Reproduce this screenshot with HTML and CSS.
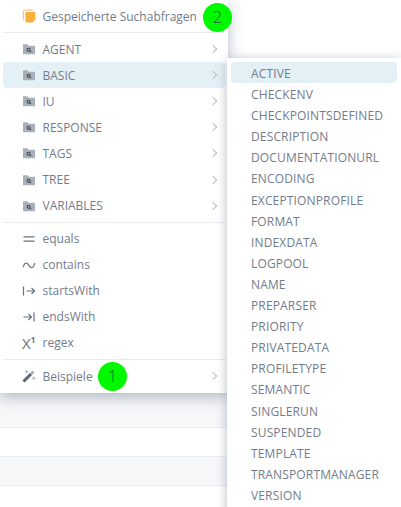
FILE: index.html
```html
<!DOCTYPE html>
<html lang="en">
<head>
    <meta charset="UTF-8">
    <title>Suchabfragen</title>
    <link rel="stylesheet" href="styles.css">
</head>
<body>
    <!-- Table rows behind the menus -->
    <div class="table-rows">
        <div class="table-row first shaded"></div>
        <div class="table-row"></div>
        <div class="table-row shaded"></div>
    </div>

    <!-- Main menu -->
    <div class="menu main-menu">
        <div class="menu-item top-item">
            <svg class="icon" viewBox="0 0 14 14"><path d="M1.400 10.500V3A1.800 1.800 0 0 1 3.200 1.200h7.400" fill="none" stroke="#f8c283" stroke-width="1.300"/><path d="M4.600 3h7.600c.7 0 1.200.5 1.200 1.200v6.600L10.600 13.400H4.600c-.7 0-1.200-.5-1.200-1.200V4.200C3.400 3.500 3.900 3 4.600 3z" fill="#fbb03b"/></svg>
            <span class="label">Gespeicherte Suchabfragen</span>
        </div>
        <div class="divider"></div>
        <div class="menu-item"><svg class="icon"><use href="#folder"/></svg><span class="label">AGENT</span><span class="chevron"></span></div>
        <div class="menu-item active"><svg class="icon"><use href="#folder"/></svg><span class="label">BASIC</span><span class="chevron"></span></div>
        <div class="menu-item"><svg class="icon"><use href="#folder"/></svg><span class="label">IU</span><span class="chevron"></span></div>
        <div class="menu-item"><svg class="icon"><use href="#folder"/></svg><span class="label">RESPONSE</span><span class="chevron"></span></div>
        <div class="menu-item"><svg class="icon"><use href="#folder"/></svg><span class="label">TAGS</span><span class="chevron"></span></div>
        <div class="menu-item"><svg class="icon"><use href="#folder"/></svg><span class="label">TREE</span><span class="chevron"></span></div>
        <div class="menu-item"><svg class="icon"><use href="#folder"/></svg><span class="label">VARIABLES</span><span class="chevron"></span></div>
        <div class="divider"></div>
        <div class="menu-item">
            <svg class="icon" viewBox="0 0 14 14"><path d="M1.500 4.800h11M1.500 9.200h11" class="stroke"/></svg>
            <span class="label">equals</span>
        </div>
        <div class="menu-item">
            <svg class="icon" viewBox="0 0 14 14"><path d="M1.300 9.200C2 5.600 3.600 4.600 5 5.200c1.600.7 2.400 4.200 4.200 4.400 1.600.2 2.900-1.200 3.500-4.400" class="stroke"/></svg>
            <span class="label">contains</span>
        </div>
        <div class="menu-item">
            <svg class="icon" viewBox="0 0 14 14"><path d="M1.500 2.500v9M4.500 7h8M9.500 4l3 3-3 3" class="stroke"/></svg>
            <span class="label">startsWith</span>
        </div>
        <div class="menu-item">
            <svg class="icon" viewBox="0 0 14 14"><path d="M12 2.500v9M1.500 7h8M6.500 4l3 3-3 3" class="stroke"/></svg>
            <span class="label">endsWith</span>
        </div>
        <div class="menu-item">
            <span class="icon regex-icon">X<sup>1</sup></span>
            <span class="label">regex</span>
        </div>
        <div class="divider"></div>
        <div class="menu-item">
            <svg class="icon" viewBox="0 0 14 14"><path d="M1.500 12.500 9 5" fill="none" stroke="#5b6472" stroke-width="3"/><path d="M9 5 11.500 2.500" fill="none" stroke="#aab1bc" stroke-width="3"/><path d="M4.500 1v3.400M2.800 2.700h3.400M11.800 7.500v3.400M10.100 9.200h3.400" fill="none" stroke="#aab1bc" stroke-width="1"/></svg>
            <span class="label">Beispiele</span>
            <span class="chevron"></span>
        </div>
    </div>

    <!-- Submenu of BASIC -->
    <div class="menu sub-menu">
        <div class="sub-item active">ACTIVE</div>
        <div class="sub-item">CHECKENV</div>
        <div class="sub-item">CHECKPOINTSDEFINED</div>
        <div class="sub-item">DESCRIPTION</div>
        <div class="sub-item">DOCUMENTATIONURL</div>
        <div class="sub-item">ENCODING</div>
        <div class="sub-item">EXCEPTIONPROFILE</div>
        <div class="sub-item">FORMAT</div>
        <div class="sub-item">INDEXDATA</div>
        <div class="sub-item">LOGPOOL</div>
        <div class="sub-item">NAME</div>
        <div class="sub-item">PREPARSER</div>
        <div class="sub-item">PRIORITY</div>
        <div class="sub-item">PRIVATEDATA</div>
        <div class="sub-item">PROFILETYPE</div>
        <div class="sub-item">SEMANTIC</div>
        <div class="sub-item">SINGLERUN</div>
        <div class="sub-item">SUSPENDED</div>
        <div class="sub-item">TEMPLATE</div>
        <div class="sub-item">TRANSPORTMANAGER</div>
        <div class="sub-item">VERSION</div>
    </div>

    <!-- Numbered markers -->
    <div class="marker marker-one">1</div>
    <div class="marker marker-two">2</div>

    <svg class="defs" width="0" height="0">
        <symbol id="folder" viewBox="0 0 14 14">
            <path d="M1 3c0-.4.3-.7.7-.7h3.600l1.400 1.400h5.600c.4 0 .7.3.7.7v7.200c0 .4-.3.7-.7.7H1.700c-.4 0-.7-.3-.7-.7z" fill="#a9b0ba"/>
            <circle cx="6.600" cy="7.800" r="1.500" fill="none" stroke="#3f4855" stroke-width="1.100"/>
            <path d="M7.700 8.900 9 10.200" stroke="#3f4855" stroke-width="1.100"/>
        </symbol>
    </svg>
</body>
</html>
```

FILE: styles.css
```css
body {
    margin: 0;
    position: relative;
    overflow: hidden;
    height: 507px;
    background-color: white;
    font-family: "Open Sans", Arial, sans-serif;
    font-size: 12px;
    color: #737c8a;
}

.table-rows {
    padding-top: 393px;
}

.table-row {
    height: 28px;
    border-bottom: 1px solid #e8ebef;
}

.table-row.first {
    height: 34px;
}

.table-row.shaded {
    background-color: #f6f7f9;
}

.menu {
    position: absolute;
    background-color: white;
    box-sizing: border-box;
}

.main-menu {
    top: 0;
    left: 0;
    width: 228px;
    height: 393px;
    padding: 3px 3px 0;
    box-shadow: 0 4px 14px rgba(70, 85, 110, 0.4);
}

.sub-menu {
    top: 58px;
    left: 227px;
    width: 174px;
    height: 470px;
    padding: 4px;
    box-shadow: 0 2px 10px rgba(70, 85, 110, 0.4);
}

.menu-item {
    display: flex;
    align-items: center;
    height: 26.08px;
    padding: 0 9px 0 19px;
    border-radius: 4px;
}

.menu-item.active {
    background-color: #e3f1f7;
}

.icon {
    width: 14px;
    height: 14px;
    margin-right: 6.500px;
    flex-shrink: 0;
}

.stroke {
    fill: none;
    stroke: #667080;
    stroke-width: 1.200;
}

.regex-icon {
    font-size: 15px;
    line-height: 14px;
    white-space: nowrap;
    color: #667080;
}

.regex-icon sup {
    font-size: 8px;
    font-weight: 700;
    line-height: 0;
}

.label {
    flex: 1;
}

.chevron {
    width: 6px;
    height: 6px;
    box-sizing: border-box;
    border-top: 1px solid #b8bec7;
    border-right: 1px solid #b8bec7;
    transform: rotate(45deg);
}

.divider {
    height: 1px;
    margin: 3px 0;
    background-color: #e8ebf0;
}

.sub-item {
    height: 21.100px;
    line-height: 23.500px;
    padding-left: 20px;
    border-radius: 4px;
    letter-spacing: 0.15px;
}

.sub-item.active {
    background-color: #e3f1f7;
}

.marker {
    position: absolute;
    width: 29px;
    height: 29px;
    line-height: 29px;
    border-radius: 50%;
    background-color: #00f800;
    text-align: center;
    font-size: 16px;
    font-weight: 300;
    color: #1f5d2a;
}

.marker-one {
    top: 362px;
    left: 98px;
}

.marker-two {
    top: 3px;
    left: 203px;
}

.defs {
    position: absolute;
}
```
